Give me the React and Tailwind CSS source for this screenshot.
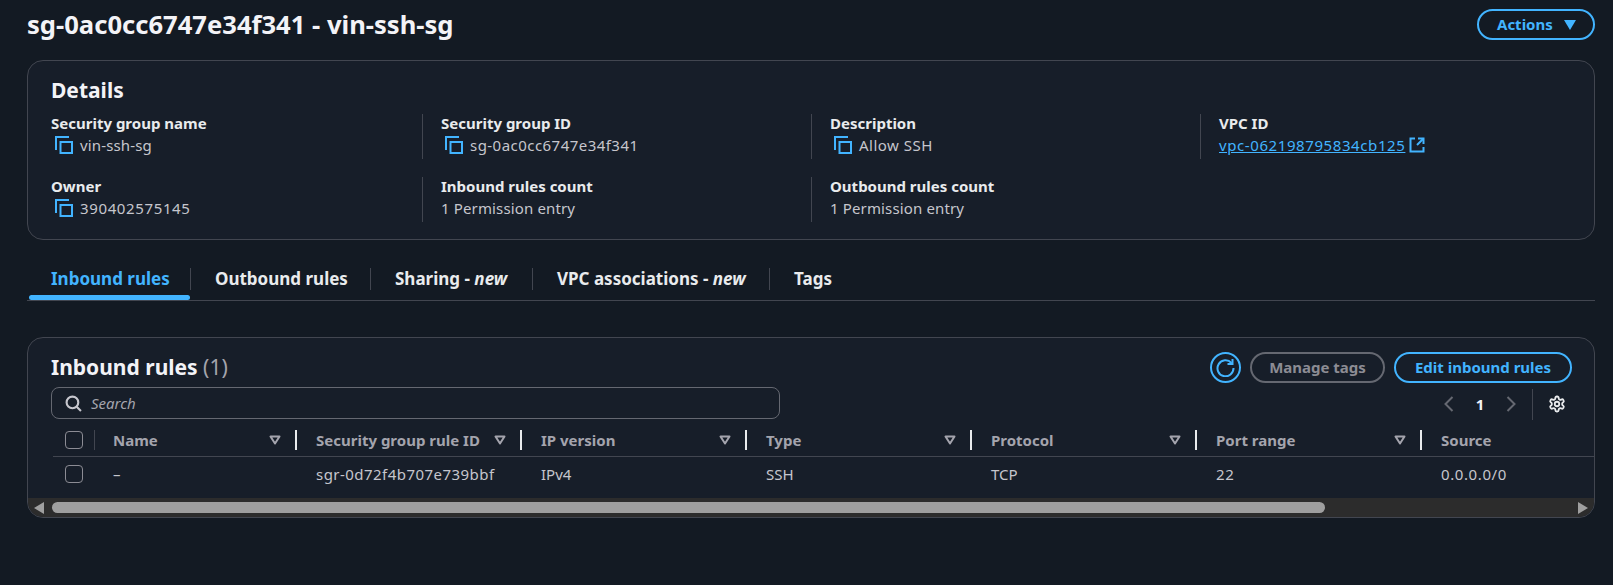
const font = { fontFamily: '"Noto Sans", sans-serif' };

const CopyIcon = () => (
  <svg width="18" height="18" viewBox="0 0 18 18" fill="none" stroke="#42b4ff" strokeWidth="2" className="shrink-0">
    <path d="M1 14V1h13" />
    <rect x="5.5" y="6" width="11.5" height="11" />
  </svg>
);

const ExternalIcon = () => (
  <svg width="16" height="16" viewBox="0 0 16 16" fill="none" stroke="#42b4ff" strokeWidth="2" className="inline-block ml-1 shrink-0">
    <path d="M6 1.5H1.5v13h13V10" />
    <path d="M9 1.5h5.5V7" />
    <path d="M14.5 1.5 8 8" />
  </svg>
);

const SortIcon = () => (
  <svg width="12" height="10" viewBox="0 0 12 10" fill="none" stroke="#a4a4ad" strokeWidth="2" className="shrink-0">
    <path d="M1.5 1.5h9L6 8.5z" strokeLinejoin="round" />
  </svg>
);

const Checkbox = () => <div className="w-[18px] h-[18px] rounded-[4px] border border-[#8c8c94] shrink-0"></div>;

const Field = ({ label, first, children }) => (
  <div className={`h-[45px] flex flex-col ${first ? '' : 'border-l border-[#424650] pl-[18px]'}`}>
    <div className="text-[15px] leading-[20px] font-bold text-[#e9ebed] -mt-px">{label}</div>
    <div className="text-[15px] leading-[24px] text-[#c6c6cd] flex items-center">{children}</div>
  </div>
);

const CopyValue = ({ className, children }) => (
  <span className={`flex items-center gap-[7px] pl-1 ${className}`}>
    <CopyIcon />
    {children}
  </span>
);

const tabs = [
  { label: 'Inbound rules', active: true, width: 'w-[164px]' },
  { label: 'Outbound rules', width: 'w-[180px]' },
  { label: 'Sharing - ', isNew: true, width: 'w-[162px]' },
  { label: 'VPC associations - ', isNew: true, width: 'w-[237px]' },
  { label: 'Tags', width: 'w-[80px]', last: true },
];

const columns = ['Security group rule ID', 'IP version', 'Type', 'Protocol', 'Port range'];
const cells = [
  { text: 'sgr-0d72f4b707e739bbf', className: 'tracking-[0.46px]' },
  { text: 'IPv4', className: '' },
  { text: 'SSH', className: '' },
  { text: 'TCP', className: '' },
  { text: '22', className: 'tracking-[0.6px]' },
];

export default function App() {
  return (
    <div className="min-h-[585px] bg-[#131a23] pl-[27px] pr-[18px] overflow-hidden" style={font}>
      <div className="h-[60px] flex justify-between pt-[9px]">
        <h1 className="text-[25.6px] leading-[32px] font-bold text-[#f3f3f7]">sg-0ac0cc6747e34f341 - vin-ssh-sg</h1>
        <button className="h-[31px] w-[118px] rounded-full border-2 border-[#42b4ff] text-[#42b4ff] text-[15px] font-bold flex items-center pl-[18px]">
          Actions
          <svg width="12" height="10" viewBox="0 0 12 10" fill="#42b4ff" className="ml-[11px]">
            <path d="M0 0h12L6 10z" />
          </svg>
        </button>
      </div>

      <section className="h-[180px] rounded-[16px] border border-[#424650] bg-[#171e29] pl-[23px] pt-[14px]">
        <h2 className="text-[21px] leading-[30px] font-bold text-[#f3f3f7]">Details</h2>
        <div className="grid grid-cols-[371px_389px_389px_389px] gap-y-[18px] mt-[9px]">
          <Field label="Security group name" first><CopyValue className="tracking-[0.14px]">vin-ssh-sg</CopyValue></Field>
          <Field label="Security group ID"><CopyValue className="tracking-[0.46px]">sg-0ac0cc6747e34f341</CopyValue></Field>
          <Field label="Description"><CopyValue className="tracking-[0.5px]">Allow SSH</CopyValue></Field>
          <Field label="VPC ID">
            <a className="text-[#42b4ff] underline flex items-center tracking-[0.59px]">vpc-062198795834cb125 <ExternalIcon /></a>
          </Field>
          <Field label="Owner" first><CopyValue className="tracking-[0.63px]">390402575145</CopyValue></Field>
          <Field label="Inbound rules count"><span className="tracking-[0.14px]">1 Permission entry</span></Field>
          <Field label="Outbound rules count"><span className="tracking-[0.14px]">1 Permission entry</span></Field>
        </div>
      </section>

      <div className="mt-[24px] h-[37px] flex border-b border-[#424650] relative">
        {tabs.map(tab => (
          <div key={tab.label} className={`${tab.width} h-[22px] mt-[4px] pl-[24px] text-[17px] leading-[22px] font-bold whitespace-nowrap ${tab.last ? '' : 'border-r border-[#424650]'} ${tab.active ? 'text-[#42b4ff]' : 'text-[#e9ebed]'}`}>
            {tab.label}
            {tab.isNew && <em>new</em>}
          </div>
        ))}
        <div className="absolute left-[2px] bottom-0 w-[161px] h-[5px] rounded-[3px] bg-[#42b4ff]"></div>
      </div>

      <section className="mt-[36px] h-[181px] rounded-[16px] border border-[#424650] bg-[#171e29] overflow-hidden flex flex-col">
        <div className="flex justify-between pl-[23px] pr-[22px] pt-[14px]">
          <h2 className="text-[21px] leading-[30px] font-bold text-[#f3f3f7]">
            Inbound rules <span className="font-normal text-[#a4a4ad]">(1)</span>
          </h2>
          <div className="flex items-center gap-[9px]">
            <button className="w-[31px] h-[31px] rounded-full border-2 border-[#42b4ff] flex items-center justify-center">
              <svg width="19" height="19" viewBox="0 0 19 19" fill="none" stroke="#42b4ff" strokeWidth="2">
                <path d="M15.5 5A8 8 0 1 0 17.5 10" />
                <path d="M16.5 1v5h-5" />
              </svg>
            </button>
            <button className="h-[31px] w-[135px] rounded-full border-2 border-[#656871] text-[#8c8c94] text-[15px] font-bold">Manage tags</button>
            <button className="h-[31px] w-[178px] rounded-full border-2 border-[#42b4ff] text-[#42b4ff] text-[15px] font-bold">Edit inbound rules</button>
          </div>
        </div>

        <div className="flex justify-between pl-[23px] pr-[28px] mt-[2px] h-[32px]">
          <div className="w-[729px] h-[32px] rounded-[8px] border border-[#656871] flex items-center pl-[13px] gap-[9px] mt-[2px]">
            <svg width="17" height="17" viewBox="0 0 16 16" fill="none" stroke="#c6c6cd" strokeWidth="2">
              <circle cx="7" cy="7" r="5.5" />
              <path d="m11 11 4 4" />
            </svg>
            <span className="text-[15px] italic text-[#a4a4ad]">Search</span>
          </div>
          <div className="flex items-center h-[32px] mt-[3px]">
            <svg width="10" height="16" viewBox="0 0 10 16" fill="none" stroke="#656871" strokeWidth="2"><path d="M8.5 1 1.5 8l7 7" /></svg>
            <span className="w-[52px] text-center text-[15px] font-bold text-[#f3f3f7]">1</span>
            <svg width="10" height="16" viewBox="0 0 10 16" fill="none" stroke="#656871" strokeWidth="2"><path d="m1.5 1 7 7-7 7" /></svg>
            <div className="w-px h-[31px] bg-[#424650] ml-[16px] mr-[15px]"></div>
            <svg width="18" height="18" viewBox="0 0 24 24" fill="none" stroke="#e9ebed" strokeWidth="2.4" strokeLinecap="round" strokeLinejoin="round">
              <path d="M12.22 2h-.44a2 2 0 0 0-2 2v.18a2 2 0 0 1-1 1.73l-.43.25a2 2 0 0 1-2 0l-.15-.08a2 2 0 0 0-2.73.73l-.22.38a2 2 0 0 0 .73 2.73l.15.1a2 2 0 0 1 1 1.72v.51a2 2 0 0 1-1 1.74l-.15.09a2 2 0 0 0-.73 2.73l.22.38a2 2 0 0 0 2.73.73l.15-.08a2 2 0 0 1 2 0l.43.25a2 2 0 0 1 1 1.73V20a2 2 0 0 0 2 2h.44a2 2 0 0 0 2-2v-.18a2 2 0 0 1 1-1.73l.43-.25a2 2 0 0 1 2 0l.15.08a2 2 0 0 0 2.73-.73l.22-.39a2 2 0 0 0-.73-2.73l-.15-.08a2 2 0 0 1-1-1.74v-.5a2 2 0 0 1 1-1.74l.15-.09a2 2 0 0 0 .73-2.73l-.22-.38a2 2 0 0 0-2.73-.73l-.15.08a2 2 0 0 1-2 0l-.43-.25a2 2 0 0 1-1-1.73V4a2 2 0 0 0-2-2z" />
              <circle cx="12" cy="12" r="3" />
            </svg>
          </div>
        </div>

        <div className="ml-[25px] mt-[13px] h-[27px] flex items-start border-b border-[#424650]">
          <div className="w-[42px] pl-[12px] h-[20px] flex items-center border-r border-[#424650]"><Checkbox /></div>
          <div className="w-[202px] h-[20px] pl-[18px] pr-[14px] flex items-center justify-between text-[15px] font-bold text-[#a4a4ad] border-r-2 border-[#e9ebed]">
            Name <SortIcon />
          </div>
          {columns.map(col => (
            <div key={col} className="w-[225px] shrink-0 h-[20px] pl-[19px] pr-[14px] flex items-center justify-between text-[15px] font-bold text-[#a4a4ad] border-r-2 border-[#e9ebed]">
              {col} <SortIcon />
            </div>
          ))}
          <div className="pl-[19px] h-[20px] flex items-center text-[15px] font-bold text-[#a4a4ad]">Source</div>
        </div>

        <div className="ml-[25px] h-[41px] pb-[7px] flex items-center text-[15px] text-[#c6c6cd]">
          <div className="w-[42px] pl-[12px]"><Checkbox /></div>
          <div className="w-[202px] pl-[18px]">–</div>
          {cells.map(cell => (
            <div key={cell.text} className={`w-[225px] shrink-0 pl-[19px] ${cell.className}`}>{cell.text}</div>
          ))}
          <div className="pl-[19px] tracking-[0.6px]">0.0.0.0/0</div>
        </div>

        <div className="h-[19px] bg-[#2c2c2c] flex items-center pl-[6px] pr-[6px]">
          <svg width="10" height="12" viewBox="0 0 10 12" fill="#9f9f9f" className="shrink-0"><path d="M10 0v12L0 6z" /></svg>
          <div className="ml-[8px] w-[1273px] h-[11px] rounded-full bg-[#9f9f9f]"></div>
          <svg width="10" height="12" viewBox="0 0 10 12" fill="#9f9f9f" className="ml-auto shrink-0"><path d="M0 0v12l10-6z" /></svg>
        </div>
      </section>
    </div>
  );
}
